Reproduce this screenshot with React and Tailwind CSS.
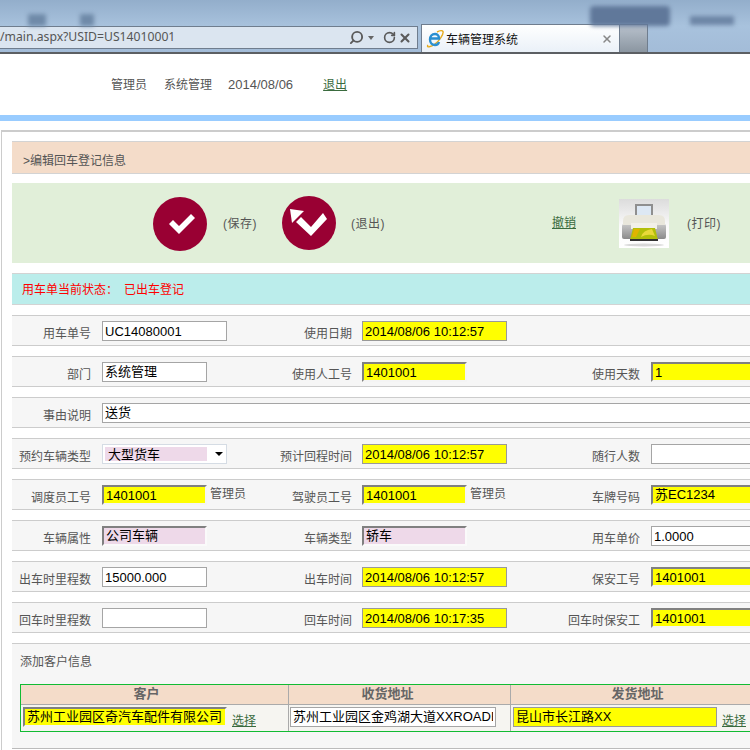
import { RotateCw, Search, X } from "lucide-react";

const sans = "[font-family:'Liberation_Sans','Noto_Sans_CJK_SC',sans-serif]";

const fieldStyles = {
  white: "border border-[#a5a5a5] bg-white",
  date: "border border-[#999] bg-[#ffff00]",
  yellow: "border-2 border-[#f4f4f4] border-t-[#808080] border-l-[#808080] bg-[#ffff00]",
  pink: "border-2 border-[#fafafa] border-t-[#808080] border-l-[#808080] bg-[#eed9e9]",
};

function Field({ value = "", kind = "white", width, cjk }) {
  return (
    <input
      readOnly
      value={value}
      style={{ width }}
      className={`h-5 px-[2px] text-[13px] leading-none text-black outline-none ${cjk ? "pb-[3px]" : ""} ${sans} ${fieldStyles[kind]}`}
    />
  );
}

function Label({ children, width, className = "" }) {
  return (
    <div style={{ width }} className={`shrink-0 pt-[11px] text-right text-xs leading-[14px] text-[#555] ${className}`}>
      {children}
    </div>
  );
}

function Row({ children }) {
  return <div className="flex h-[31px] w-[760px] shrink-0 border-y border-[#ccc] bg-[#f6f6f6]">{children}</div>;
}

function Cell({ width, gap, children }) {
  return (
    <div style={{ width, paddingLeft: gap }} className="flex shrink-0 items-start gap-[2px] pt-[5px]">
      {children}
    </div>
  );
}

function Triple({ a, b, c }) {
  return (
    <Row>
      <Label width={79}>{a.label}</Label>
      <Cell width={169} gap={11}>{a.field}</Cell>
      <Label width={92}>{b?.label}</Label>
      <Cell width={208} gap={10}>{b?.field}</Cell>
      <Label width={80}>{c?.label}</Label>
      <Cell width={130} gap={11}>{c?.field}</Cell>
    </Row>
  );
}

function Note({ children }) {
  return <span className="pl-[1px] pt-[2px] text-xs leading-[14px] text-[#555]">{children}</span>;
}

function Circle({ exit }) {
  return (
    <svg width="54" height="54" viewBox="0 0 54 54" className="shrink-0">
      <circle cx="27" cy="27" r="27" fill="#990033" />
      {exit ? (
        <>
          <path d="M19 21 L29 31 L41 17 L45 23 L29 40 L14 26 Z" fill="#fff" />
          <path d="M8 13 L22 15 L10 27 Z" fill="#fff" />
        </>
      ) : (
        <path d="M16 27 L20 23 L26 29 L38 17 L42 21 L26 37 Z" fill="#fff" />
      )}
    </svg>
  );
}

function Printer() {
  return (
    <svg width="50" height="49" viewBox="0 0 50 49" className="shrink-0">
      <defs>
        <linearGradient id="pb" x1="0" y1="0" x2="0" y2="1">
          <stop offset="0" stopColor="#dcdcdc" />
          <stop offset="0.55" stopColor="#fafafa" />
          <stop offset="1" stopColor="#fff" />
        </linearGradient>
        <linearGradient id="pl" x1="0" y1="0" x2="0" y2="1">
          <stop offset="0" stopColor="#c8c8c8" />
          <stop offset="1" stopColor="#8a8a8a" />
        </linearGradient>
      </defs>
      <rect width="50" height="49" fill="url(#pb)" />
      <rect x="16" y="5" width="18" height="14" fill="#8f8f8f" />
      <rect x="18" y="7" width="14" height="12" fill="#dde8f4" />
      <rect x="3" y="25" width="44" height="15" rx="2" fill="url(#pl)" />
      <path d="M4 22 Q4 16 10 16 L40 16 Q46 16 46 22 L46 26 L4 26 Z" fill="#e9e7dc" />
      <rect x="12" y="24" width="26" height="6" fill="#f2f0e8" />
      <path d="M14 29 L36 29 L39 41 L11 41 Z" fill="#b2bf0a" />
      <path d="M22 38 Q24 31 33 30 L36 37 Q29 34 22 38 Z" fill="#e9d93a" />
      <path d="M15 30 L21 30 L17 38 L13 38 Z" fill="#e0b400" />
      <rect x="11" y="40" width="28" height="2" fill="#333" />
      <ellipse cx="25" cy="46" rx="20" ry="1.5" fill="#d8d8d8" />
    </svg>
  );
}

function IeIcon() {
  return (
    <svg width="18" height="18" viewBox="0 0 18 18" className="shrink-0">
      <path d="M2 15 C0 18 5 17 9 14 C13 11 18 4 17 1.5 C16 0 13 1 11 2" fill="none" stroke="#e6ac1f" strokeWidth="1.4" />
      <path d="M4.5 8.5 H13 C13 5.5 11 4 9 4 C6 4 4 6.5 4 9.5 C4 12.5 6 15 9 15 C11 15 12.5 14 13 12" fill="none" stroke="#2a8fd0" strokeWidth="2.4" />
    </svg>
  );
}

function BrowserBar() {
  return (
    <div className="relative h-[54px] shrink-0 overflow-hidden border-b-2 border-[#5c5f63] bg-gradient-to-b from-[#93aecb] via-[#a8c2dd] to-[#a3bcd8]">
      <div className="absolute left-[590px] top-[6px] h-[20px] w-[80px] rounded-sm bg-[#60789a] blur-[2px]" />
      <div className="absolute left-[690px] top-[16px] h-[9px] w-[44px] bg-[#6d86a6] blur-[2px]" />
      <div className="absolute left-[28px] top-[14px] h-[12px] w-[18px] bg-[#6f8aa8] blur-[2px]" />
      <div className="absolute left-[80px] top-[14px] h-[12px] w-[14px] bg-[#6f8aa8] blur-[2px]" />
      <div className="flex h-full items-end">
        <div className="mb-[3px] flex h-[23px] w-[418px] shrink-0 items-center justify-between border border-l-0 border-[#6f7d8e] bg-[#dbe5f0] pr-[5px]">
          <span className="whitespace-nowrap text-[12.2px] text-[#555] [font-family:'Noto_Sans',sans-serif]">/main.aspx?USID=US14010001</span>
          <div className="flex items-center text-[#5a5a5a]">
            <Search size={15} strokeWidth={3} className="-scale-x-100" />
            <span className="ml-[4px] h-0 w-0 border-x-[3px] border-t-[4px] border-x-transparent border-t-[#666]" />
            <RotateCw size={13} strokeWidth={3} className="ml-[9px]" />
            <X size={14} strokeWidth={3.5} className="ml-[2px]" />
          </div>
        </div>
        <div className="ml-[3px] flex h-[28px] w-[199px] shrink-0 items-center border border-b-0 border-[#6f7d8e] bg-gradient-to-b from-white to-[#eaf1f8] pl-[4px] pr-[6px]">
          <IeIcon />
          <span className="ml-[2px] flex-1 text-xs text-[#111] [font-family:'Noto_Sans_CJK_SC',sans-serif]">车辆管理系统</span>
          <X size={12} strokeWidth={3} className="text-[#888]" />
        </div>
        <div className="h-[28px] w-[28px] shrink-0 border border-b-0 border-l-0 border-[#6f7d8e] bg-gradient-to-b from-[#b9c2cd] to-[#8b96a1]" />
      </div>
    </div>
  );
}

export default function App() {
  return (
    <div className={`flex h-[750px] w-[750px] flex-col overflow-hidden bg-white ${sans}`}>
      <BrowserBar />

      <header className="flex h-[61px] shrink-0 items-center pl-[111px] pt-[1px] text-xs text-[#555]">
        <span>管理员</span>
        <span className="ml-[17px]">系统管理</span>
        <span className="ml-4 text-[13px]">2014/08/06</span>
        <a className="ml-[30px] text-[#3a6b3e] underline">退出</a>
      </header>
      <div className="h-[6px] shrink-0 bg-[#99ccff]" />

      <main className="ml-[1px] mt-[9px] flex min-h-0 flex-1 flex-col border-l border-t-2 border-[#ccc] pl-[10px] pt-[9px]">
        <div className="flex h-[33px] w-[760px] shrink-0 items-center border-y border-[#d3d3d3] bg-[#f4dcc9] pl-[11px] pt-[6px] text-xs text-[#555]">
          &gt;编辑回车登记信息
        </div>

        <div className="mt-[9px] flex h-[80px] w-[760px] shrink-0 items-center bg-[#e1efd9] text-xs text-[#555]">
          <div className="ml-[141px] mt-[2px]"><Circle /></div>
          <span className="ml-[16px] mt-[2px] w-[59px] tracking-[0.5px]">(保存)</span>
          <Circle exit />
          <span className="ml-[15px] mt-[2px] w-[201px] tracking-[0.5px]">(退出)</span>
          <a className="w-[67px] text-[#3a6b3e] underline">撤销</a>
          <Printer />
          <span className="ml-[18px] mt-[2px] tracking-[0.5px]">(打印)</span>
        </div>

        <div className="mt-[10px] flex h-[32px] w-[760px] shrink-0 items-center border-y border-[#d3d3d3] bg-[#bbedeb] pl-[10px] pt-[1px] text-xs text-[#f00]">
          用车单当前状态：<span className="ml-[6px]">已出车登记</span>
        </div>

        <div className="mt-[10px] flex flex-col gap-[10px]">
          <Triple
            a={{ label: "用车单号", field: <Field value="UC14080001" width={125} /> }}
            b={{ label: "使用日期", field: <Field value="2014/08/06 10:12:57" kind="date" width={145} /> }}
          />
          <Triple
            a={{ label: "部门", field: <Field value="系统管理" width={105} cjk /> }}
            b={{ label: "使用人工号", field: <Field value="1401001" kind="yellow" width={105} /> }}
            c={{ label: "使用天数", field: <Field value="1" kind="yellow" width={110} /> }}
          />
          <Row>
            <Label width={79}>事由说明</Label>
            <Cell width={670} gap={11}><Field value="送货" width={659} cjk /></Cell>
          </Row>
          <Triple
            a={{
              label: "预约车辆类型",
              field: (
                <div className="flex h-5 w-[125px] items-center border border-[#d5dce4] bg-white pl-[2px]">
                  <span className="h-[14px] w-[102px] bg-[#eed9e9] pl-[3px] text-[13px] leading-[15px] text-black">大型货车</span>
                  <span className="ml-[8px] h-0 w-0 border-x-[4px] border-t-[4px] border-x-transparent border-t-black" />
                </div>
              ),
            }}
            b={{ label: "预计回程时间", field: <Field value="2014/08/06 10:12:57" kind="date" width={145} /> }}
            c={{ label: "随行人数", field: <Field width={110} /> }}
          />
          <Triple
            a={{
              label: "调度员工号",
              field: (
                <>
                  <Field value="1401001" kind="yellow" width={105} />
                  <Note>管理员</Note>
                </>
              ),
            }}
            b={{
              label: "驾驶员工号",
              field: (
                <>
                  <Field value="1401001" kind="yellow" width={105} />
                  <Note>管理员</Note>
                </>
              ),
            }}
            c={{ label: "车牌号码", field: <Field value="苏EC1234" kind="yellow" width={110} cjk /> }}
          />
          <Triple
            a={{ label: "车辆属性", field: <Field value="公司车辆" kind="pink" width={105} cjk /> }}
            b={{ label: "车辆类型", field: <Field value="轿车" kind="pink" width={105} cjk /> }}
            c={{ label: "用车单价", field: <Field value="1.0000" width={110} /> }}
          />
          <Triple
            a={{ label: "出车时里程数", field: <Field value="15000.000" width={105} /> }}
            b={{ label: "出车时间", field: <Field value="2014/08/06 10:12:57" kind="date" width={145} /> }}
            c={{ label: "保安工号", field: <Field value="1401001" kind="yellow" width={110} /> }}
          />
          <Triple
            a={{ label: "回车时里程数", field: <Field width={105} /> }}
            b={{ label: "回车时间", field: <Field value="2014/08/06 10:17:35" kind="date" width={145} /> }}
            c={{ label: "回车时保安工", field: <Field value="1401001" kind="yellow" width={110} /> }}
          />
        </div>

        <section className="mt-[10px] h-[106px] w-[760px] shrink-0 border-y border-t-[#ccc] border-b-[#bbb] bg-[#f6f6f6] pl-2 pt-[11px]">
          <p className="text-xs leading-[14px] text-[#555]">添加客户信息</p>
          <div className="mt-[15px] w-[760px] border-y border-l border-[#11bb33] text-[13px]">
            <div className="grid h-[19px] grid-cols-[267px_222px_1fr] bg-[#f4dcc9] text-center font-bold leading-[18px] text-[#666]">
              <div className="pr-4">客户</div>
              <div className="border-l border-[#aaa] pr-6">收货地址</div>
              <div className="border-l border-[#aaa] pr-4">发货地址</div>
            </div>
            <div className="grid h-[27px] grid-cols-[267px_222px_1fr] border-t border-[#aaa] bg-[#f6f5f1]">
              <div className="flex items-start pl-[2px] pt-[2px]">
                <Field value="苏州工业园区奇汽车配件有限公司" kind="yellow" width={204} cjk />
                <a className="ml-[5px] pt-[7px] text-xs leading-[14px] text-[#3a6b3e] underline">选择</a>
              </div>
              <div className="border-l border-[#aaa] pl-[1px] pt-[2px]">
                <Field value="苏州工业园区金鸡湖大道XXROADE" width={206} cjk />
              </div>
              <div className="flex items-start border-l border-[#aaa] pl-[2px] pt-[2px]">
                <Field value="昆山市长江路XX" kind="date" width={204} cjk />
                <a className="ml-[5px] pt-[7px] text-xs leading-[14px] text-[#3a6b3e] underline">选择</a>
              </div>
            </div>
          </div>
        </section>
      </main>
    </div>
  );
}
